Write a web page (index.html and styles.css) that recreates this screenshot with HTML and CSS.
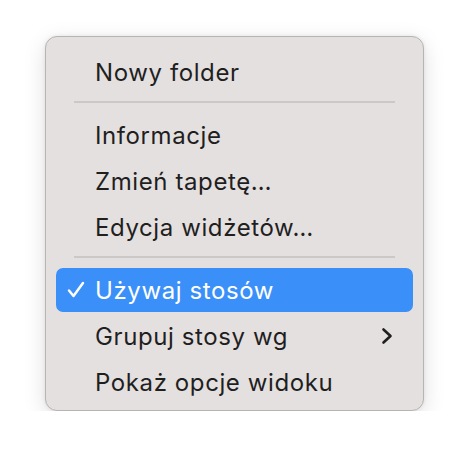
FILE: index.html
```html
<!DOCTYPE html>
<html>
  <head>
    <title>Menu</title>
    <link rel="stylesheet" href="styles.css">
  </head>
  <body>
    <div class="menu">
      <div class="item">Nowy folder</div>
      <div class="sep"></div>
      <div class="item">Informacje</div>
      <div class="item">Zmień tapetę…</div>
      <div class="item">Edycja widżetów…</div>
      <div class="sep"></div>
      <div class="item active">
        <svg class="check" width="18" height="18" viewBox="0 0 18 18"><path d="M2 9.5 L6.5 15 L16 2" fill="none" stroke="#fff" stroke-width="2.5" stroke-linecap="round" stroke-linejoin="round"/></svg>
        Używaj stosów
      </div>
      <div class="item">Grupuj stosy wg
        <svg class="chev" width="12" height="18" viewBox="0 0 12 18"><path d="M2.5 2.5 L9.5 9 L2.5 15.5" fill="none" stroke="#1f1f1f" stroke-width="2.6" stroke-linecap="round" stroke-linejoin="round"/></svg>
      </div>
      <div class="item">Pokaż opcje widoku</div>
    </div>
  </body>
</html>
```

FILE: styles.css
```css
body {
  margin: 0;
  padding: 36px 0 0 45px;
  background: #fff;
  font-family: Inter, "Noto Sans", sans-serif;
}

.menu {
  width: 357px;
  padding: 12px 10px 5px 10px;
  display: flex;
  flex-direction: column;
  background: #e5e0e0;
  border: 1px solid #b8b4b4;
  border-radius: 12px;
  box-shadow: 0 6px 22px rgba(0, 0, 0, 0.13), 0 0 4px rgba(0, 0, 0, 0.08);
}

.item {
  position: relative;
  height: 44px;
  margin: 1px 0;
  padding-left: 39px;
  display: flex;
  align-items: center;
  font-size: 24px;
  letter-spacing: 0.6px;
  color: #1f1f1f;
  border-radius: 7px;
}

.item.active {
  background: #3b8ff9;
  color: #fff;
}

.check {
  position: absolute;
  left: 11px;
  top: 13px;
}

.chev {
  position: absolute;
  right: 20px;
  top: 13px;
}

.sep {
  height: 2px;
  margin: 6px 18px 9px 18px;
  background: #cdc8c8;
}
```
